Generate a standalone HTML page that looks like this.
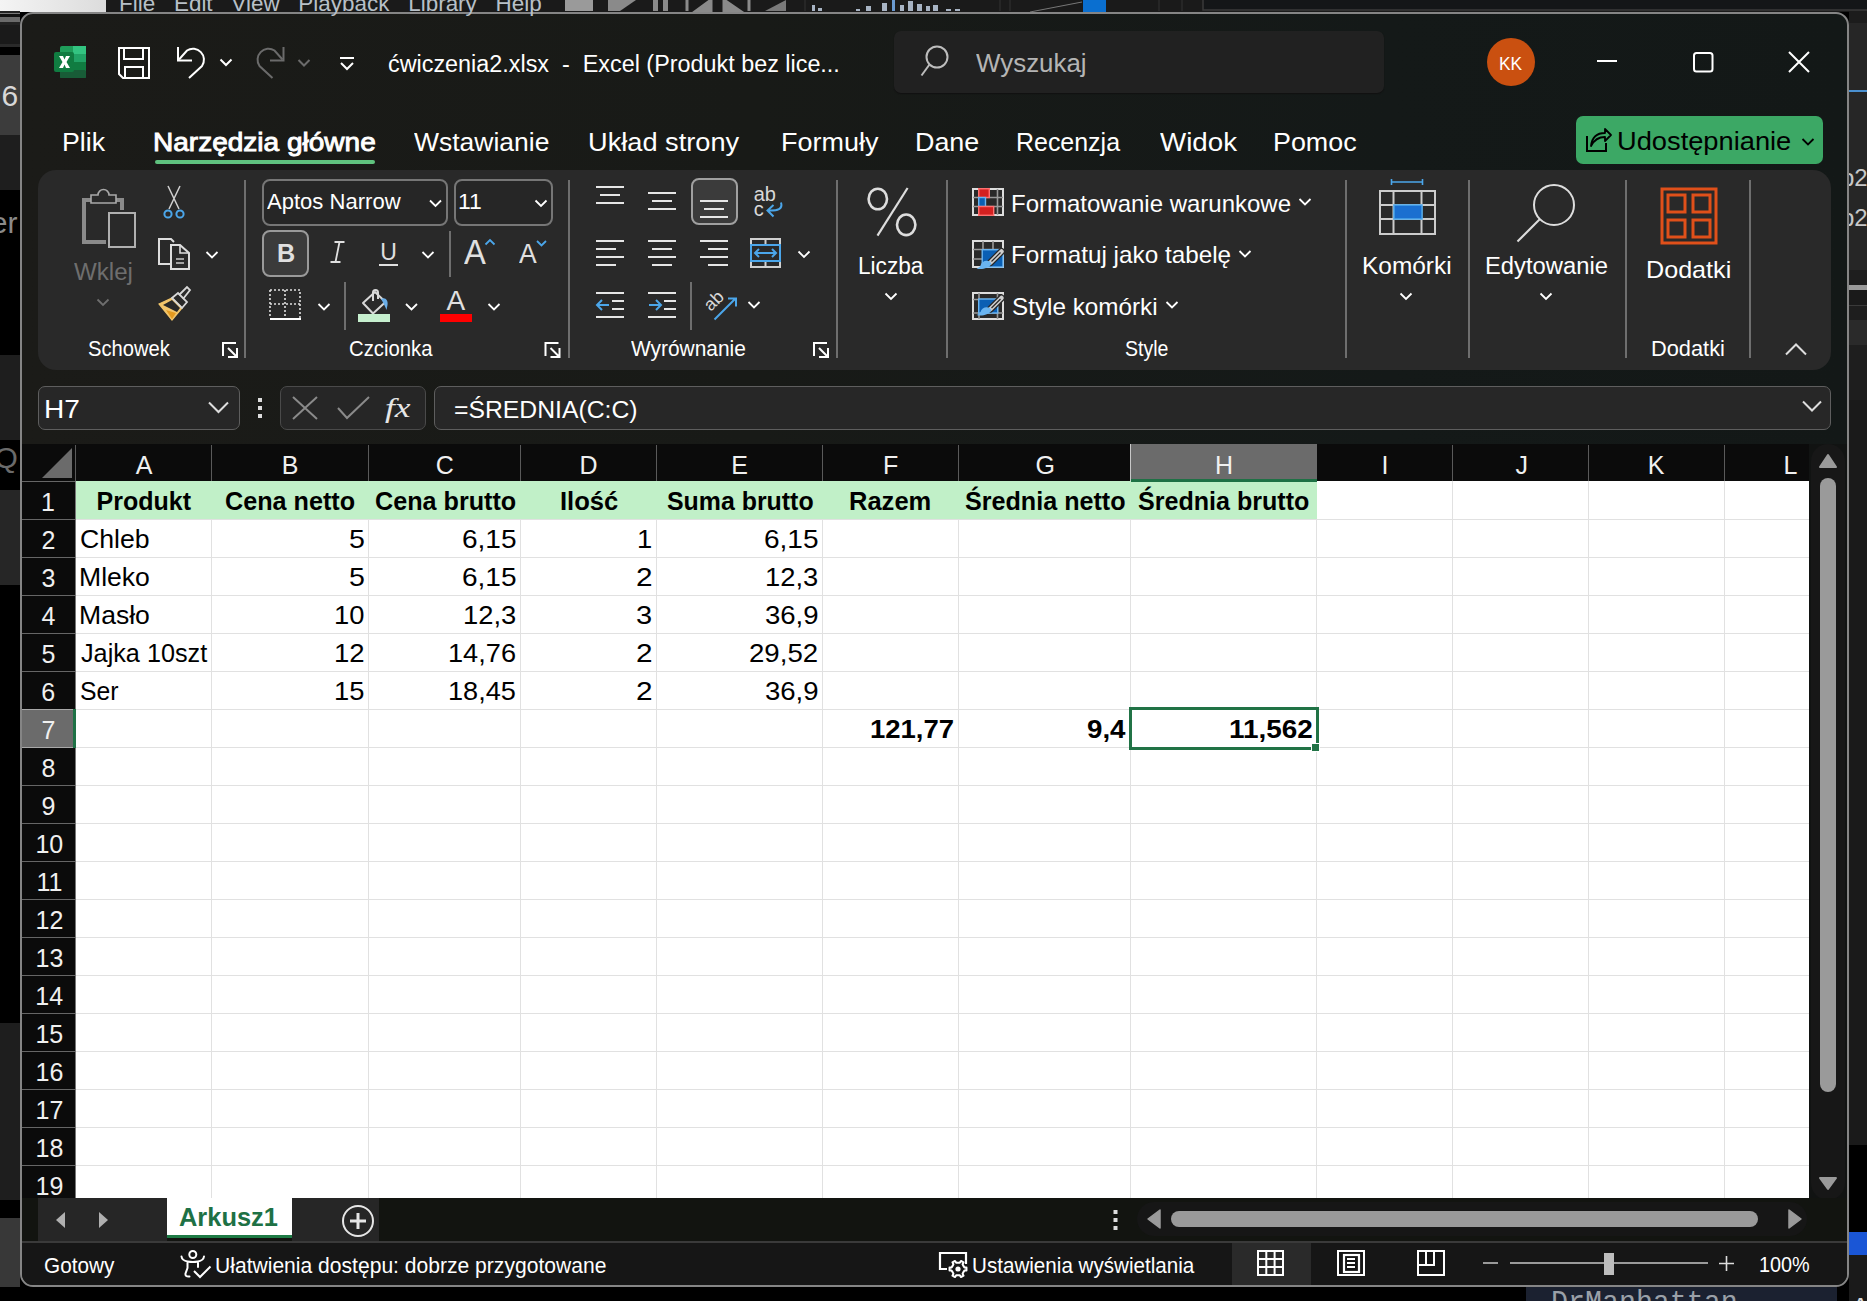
<!DOCTYPE html>
<html><head><meta charset="utf-8">
<style>
*{box-sizing:border-box;margin:0;padding:0}
html,body{width:1867px;height:1301px;overflow:hidden;background:#000;font-family:"Liberation Sans",sans-serif;color:#fff}
.a{position:absolute}
.t{position:absolute;white-space:nowrap;line-height:1}
svg{position:absolute;overflow:visible}
</style></head><body>
<div class="a" style="left:0px;top:0px;width:106px;height:12px;background:linear-gradient(90deg,#f4f4f4,#dcdcdc)"></div>
<div class="a" style="left:106px;top:0px;width:1761px;height:12px;background:#1a1a1a"></div>
<div class="a" style="left:0px;top:11px;width:20px;height:1290px;background:#000"></div>
<div class="a" style="left:0px;top:11px;width:20px;height:2px;background:#222"></div>
<div class="a" style="left:0px;top:13px;width:20px;height:1px;background:#7a7a7a"></div>
<div class="a" style="left:0px;top:14px;width:20px;height:3px;background:#111"></div>
<div class="a" style="left:0px;top:17px;width:20px;height:5px;background:#6a6a6a"></div>
<div class="a" style="left:0px;top:22px;width:20px;height:3px;background:#222"></div>
<div class="a" style="left:0px;top:25px;width:20px;height:19px;background:#1a1a1a"></div>
<div class="a" style="left:0px;top:44px;width:20px;height:3px;background:#2a2a2a"></div>
<div class="a" style="left:0px;top:55px;width:20px;height:80px;background:#3c3c3c"></div>
<div class="a" style="left:0px;top:135px;width:20px;height:55px;background:#1e1e1e"></div>
<div class="a" style="left:0px;top:355px;width:20px;height:85px;background:#1e1e1e"></div>
<div class="a" style="left:0px;top:490px;width:20px;height:95px;background:#262626"></div>
<div class="a" style="left:0px;top:1023px;width:20px;height:177px;background:#1e1e1e"></div>
<div class="a" style="left:0px;top:1218px;width:20px;height:69px;background:#383838"></div>
<div class="t" style="left:1.5px;top:80.6px;font-size:30px;color:#d8d8d8;font-weight:normal;">6</div>
<div class="t" style="left:-9.3px;top:207.6px;font-size:30px;color:#8a8a8a;font-weight:normal;">er</div>
<div class="t" style="left:-5.4px;top:442.6px;font-size:30px;color:#6a6a6a;font-weight:normal;">Q</div>
<div class="a" style="left:1849px;top:0px;width:18px;height:1301px;background:#1a1a1a"></div>
<div class="a" style="left:1849px;top:0px;width:18px;height:8px;background:#222"></div>
<div class="a" style="left:1849px;top:8px;width:18px;height:1px;background:#444"></div>
<div class="a" style="left:1849px;top:9px;width:18px;height:14px;background:#1c1c1c"></div>
<div class="a" style="left:1849px;top:23px;width:18px;height:67px;background:#262626"></div>
<div class="a" style="left:1849px;top:90px;width:18px;height:2px;background:#4a90d0"></div>
<div class="a" style="left:1849px;top:92px;width:18px;height:178px;background:#262626"></div>
<div class="a" style="left:1849px;top:270px;width:18px;height:15px;background:#1e1e1e"></div>
<div class="a" style="left:1849px;top:285px;width:18px;height:5px;background:#9a9a9a"></div>
<div class="a" style="left:1849px;top:290px;width:18px;height:15px;background:#1a1a1a"></div>
<div class="a" style="left:1849px;top:305px;width:18px;height:1px;background:#3a3a3a"></div>
<div class="a" style="left:1849px;top:306px;width:18px;height:14px;background:#1e1e1e"></div>
<div class="a" style="left:1849px;top:320px;width:18px;height:25px;background:#2a2a2a"></div>
<div class="a" style="left:1849px;top:345px;width:18px;height:55px;background:#1e1e1e"></div>
<div class="a" style="left:1849px;top:1145px;width:18px;height:87px;background:#000"></div>
<div class="a" style="left:1849px;top:1232px;width:18px;height:23px;background:#1a56d6"></div>
<div class="t" style="left:1841.0px;top:165.7px;font-size:24px;color:#c8c8c8;font-weight:normal;">b2</div>
<div class="t" style="left:1841.0px;top:205.7px;font-size:24px;color:#c8c8c8;font-weight:normal;">b2</div>
<div class="t" style="left:1850.9px;top:1294.3px;font-size:28px;color:#d8d8d8;font-weight:normal;">A</div>
<div class="a" style="left:1526px;top:1285px;width:311px;height:16px;background:#1b2130"></div>
<svg style="left:0px;top:0px;" width="1" height="1" viewBox="0 0 1 1">
<rect x="565" y="0" width="28" height="11" fill="#9a9a9a"/>
<path d="M608,0 L636,0 L620,11 H608 Z" fill="#8a8a8a"/>
<rect x="653" y="0" width="5" height="11" fill="#8a8a8a"/><rect x="663" y="0" width="5" height="11" fill="#8a8a8a"/>
<path d="M687,0 V11 M711,0 L696,11 H711 Z" stroke="#8a8a8a" stroke-width="3" fill="#8a8a8a"/>
<path d="M724,0 L740,11 H724 Z M749,0 V11" stroke="#8a8a8a" stroke-width="3" fill="#8a8a8a"/>
<path d="M765,11 L786,0 V11 Z" fill="#7a7a7a"/>
<path d="M805,0 V11 M1000,0 V11 M1010,0 V11 M1159,0 V11 M1182,0 V11" stroke="#333" stroke-width="1"/>
<rect x="812" y="5" width="3" height="6" fill="#a8b4c4"/><rect x="818" y="8" width="4" height="3" fill="#a8b4c4"/>
<rect x="856" y="9" width="4" height="2" fill="#a8b4c4"/><rect x="866" y="6" width="5" height="5" fill="#a8b4c4"/>
<rect x="882" y="3" width="5" height="8" fill="#a8b4c4"/><rect x="892" y="0" width="3" height="11" fill="#6a9ad0"/>
<rect x="900" y="5" width="4" height="6" fill="#a8b4c4"/><rect x="908" y="1" width="5" height="10" fill="#a8b4c4"/>
<rect x="917" y="4" width="5" height="7" fill="#a8b4c4"/><rect x="926" y="6" width="4" height="5" fill="#a8b4c4"/>
<rect x="933" y="5" width="5" height="6" fill="#a8b4c4"/><rect x="946" y="9" width="5" height="2" fill="#a8b4c4"/><rect x="955" y="9" width="5" height="2" fill="#a8b4c4"/>
<path d="M1030,12 L1082,2" stroke="#777" stroke-width="1"/>
<rect x="1083" y="0" width="23" height="12" fill="#0a6fd0"/>
<rect x="1203" y="-2" width="680" height="12" fill="#141618" stroke="#3a3a3a" stroke-width="1.5"/>
</svg>
<div class="a" style="left:20px;top:12px;width:1829px;height:1275px;border:2px solid #858585;border-radius:13px;background:linear-gradient(90deg,#1b1b18 0%,#181a17 40%,#141918 75%,#131817 100%);overflow:hidden"></div>
<div class="t" style="left:119.2px;top:-6.6px;font-size:22px;color:#b8c0c8;font-weight:normal;transform:scaleX(1.0209);transform-origin:left top;">File&nbsp;&nbsp; Edit&nbsp;&nbsp; View&nbsp;&nbsp; Playback&nbsp;&nbsp; Library&nbsp;&nbsp; Help</div>
<svg style="left:54px;top:46px;" width="32" height="32" viewBox="0 0 32 32">
<rect x="6" y="0" width="26" height="32" rx="2" fill="#1f9d5a"/>
<rect x="19" y="0" width="13" height="8" fill="#33c481"/>
<rect x="19" y="8" width="13" height="8" fill="#21a366"/>
<rect x="19" y="16" width="13" height="8" fill="#107c41"/>
<rect x="6" y="24" width="26" height="8" rx="1" fill="#185c37"/>
<rect x="0" y="6" width="20" height="20" rx="2" fill="#107c41"/>
<path d="M5,10 L9,10 L10.5,13.5 L12,10 L16,10 L12.5,16 L16,22 L12,22 L10.5,18.5 L9,22 L5,22 L8.5,16 Z" fill="#fff"/>
</svg>
<svg style="left:118px;top:47px;" width="32" height="32" viewBox="0 0 32 32">
<path d="M1,1 H31 V31 H5 L1,27 Z" fill="none" stroke="#fff" stroke-width="2"/>
<path d="M6,1 V12 H25 V1" fill="none" stroke="#fff" stroke-width="2"/>
<path d="M7,31 V20 H25 V31" fill="none" stroke="#fff" stroke-width="2"/>
</svg>
<svg style="left:0px;top:0px;" width="1" height="1" viewBox="0 0 1 1">
<path d="M178,47 V60.5 H192" fill="none" stroke="#fff" stroke-width="2"/>
<path d="M179,59.5 L187,50.5 A11,11 0 0 1 202,66 L189,78" fill="none" stroke="#fff" stroke-width="2"/>
<path d="M220.5,59.5 L226,65.0 L231.5,59.5" fill="none" stroke="#fff" stroke-width="2"/></svg>
<svg style="left:0px;top:0px;" width="1" height="1" viewBox="0 0 1 1">
<path d="M283.5,47 V60.5 H270" fill="none" stroke="#6b6b6b" stroke-width="2"/>
<path d="M282.5,59.5 L274.5,50.5 A11,11 0 0 0 259.5,66 L272.5,78" fill="none" stroke="#6b6b6b" stroke-width="2"/>
<path d="M298.5,60 L304,65.5 L309.5,60" fill="none" stroke="#6b6b6b" stroke-width="2"/></svg>
<svg style="left:0px;top:0px;" width="1" height="1" viewBox="0 0 1 1"><path d="M340,58 H354" stroke="#fff" stroke-width="2"/><path d="M341.0,63 L347,69.0 L353.0,63" fill="none" stroke="#fff" stroke-width="2"/></svg>
<div class="t" style="left:387.7px;top:52.5px;font-size:23px;color:#fff;font-weight:normal;transform:scaleX(1.0158);transform-origin:left top;">&#263;wiczenia2.xlsx&nbsp; -&nbsp; Excel (Produkt bez lice...</div>
<div class="a" style="left:894px;top:31px;width:490px;height:62px;background:#212121;border-radius:7px;box-shadow:0 1px 1px #111"></div>
<svg style="left:0px;top:0px;" width="1" height="1" viewBox="0 0 1 1"><circle cx="937" cy="57" r="10.5" fill="none" stroke="#bdbdbd" stroke-width="2"/><path d="M929.5,64.5 L921.5,75.5" stroke="#bdbdbd" stroke-width="2"/></svg>
<div class="t" style="left:975.9px;top:50.0px;font-size:26px;color:#b5b5b5;font-weight:normal;transform:scaleX(0.9963);transform-origin:left top;">Wyszukaj</div>
<div class="a" style="left:1487px;top:38px;width:48px;height:48px;border-radius:50%;background:#ca5010"></div>
<div class="t" style="left:1498.9px;top:53.7px;font-size:19px;color:#fff;font-weight:normal;transform:scaleX(0.9110);transform-origin:left top;">KK</div>
<svg style="left:0px;top:0px;" width="1" height="1" viewBox="0 0 1 1">
<path d="M1597,61 H1617" stroke="#fff" stroke-width="2"/>
<rect x="1694" y="53" width="18.5" height="18.5" rx="2.5" fill="none" stroke="#fff" stroke-width="2"/>
<path d="M1789,52 L1809,72 M1809,52 L1789,72" stroke="#fff" stroke-width="2"/>
</svg>
<div class="t" style="left:62.2px;top:129.0px;font-size:26px;color:#fff;font-weight:normal;transform:scaleX(1.0276);transform-origin:left top;">Plik</div>
<div class="t" style="left:153.4px;top:129.0px;font-size:26px;color:#fff;font-weight:normal;transform:scaleX(1.0777);transform-origin:left top;-webkit-text-stroke:0.9px #fff;">Narz&#281;dzia g&#322;&oacute;wne</div>
<div class="t" style="left:413.7px;top:129.0px;font-size:26px;color:#fff;font-weight:normal;transform:scaleX(1.0190);transform-origin:left top;">Wstawianie</div>
<div class="t" style="left:587.9px;top:129.0px;font-size:26px;color:#fff;font-weight:normal;transform:scaleX(1.0463);transform-origin:left top;">Uk&#322;ad strony</div>
<div class="t" style="left:780.6px;top:129.0px;font-size:26px;color:#fff;font-weight:normal;transform:scaleX(1.0371);transform-origin:left top;">Formu&#322;y</div>
<div class="t" style="left:915.3px;top:129.0px;font-size:26px;color:#fff;font-weight:normal;transform:scaleX(1.0340);transform-origin:left top;">Dane</div>
<div class="t" style="left:1016.0px;top:129.0px;font-size:26px;color:#fff;font-weight:normal;transform:scaleX(0.9595);transform-origin:left top;">Recenzja</div>
<div class="t" style="left:1159.5px;top:129.0px;font-size:26px;color:#fff;font-weight:normal;transform:scaleX(1.0666);transform-origin:left top;">Widok</div>
<div class="t" style="left:1273.3px;top:129.0px;font-size:26px;color:#fff;font-weight:normal;transform:scaleX(1.0333);transform-origin:left top;">Pomoc</div>
<div class="a" style="left:155px;top:160px;width:220px;height:4px;background:#5fc27e;border-radius:2px"></div>
<div class="a" style="left:1576px;top:116px;width:247px;height:48px;background:#3ca865;border-radius:7px"></div>
<svg style="left:0px;top:0px;" width="1" height="1" viewBox="0 0 1 1">
<path d="M1587,136 V151 H1606 V143" fill="none" stroke="#000" stroke-width="2"/>
<path d="M1591,146 C1592,137 1597,133 1605,133 V129 L1611,135 L1605,141 V137 C1599,137 1594,140 1591,146 Z" fill="none" stroke="#000" stroke-width="1.8" stroke-linejoin="round"/>
<path d="M1802.5,139 L1808,144.5 L1813.5,139" fill="none" stroke="#000" stroke-width="1.8"/></svg>
<div class="t" style="left:1616.9px;top:128.0px;font-size:26px;color:#000;font-weight:normal;transform:scaleX(1.0484);transform-origin:left top;">Udost&#281;pnianie</div>
<div class="a" style="left:38px;top:170px;width:1793px;height:200px;background:#292929;border-radius:18px"></div>
<div class="a" style="left:244px;top:180px;width:2px;height:178px;background:#6e6e6e"></div>
<div class="a" style="left:568px;top:180px;width:2px;height:178px;background:#6e6e6e"></div>
<div class="a" style="left:836px;top:180px;width:2px;height:178px;background:#6e6e6e"></div>
<div class="a" style="left:946px;top:180px;width:2px;height:178px;background:#6e6e6e"></div>
<div class="a" style="left:1345px;top:180px;width:2px;height:178px;background:#6e6e6e"></div>
<div class="a" style="left:1468px;top:180px;width:2px;height:178px;background:#6e6e6e"></div>
<div class="a" style="left:1625px;top:180px;width:2px;height:178px;background:#6e6e6e"></div>
<div class="a" style="left:1749px;top:180px;width:2px;height:178px;background:#6e6e6e"></div>
<div class="t" style="left:88.1px;top:337.9px;font-size:22px;color:#fff;font-weight:normal;transform:scaleX(0.9173);transform-origin:left top;">Schowek</div>
<div class="t" style="left:349.0px;top:337.9px;font-size:22px;color:#fff;font-weight:normal;transform:scaleX(0.9227);transform-origin:left top;">Czcionka</div>
<div class="t" style="left:630.5px;top:337.9px;font-size:22px;color:#fff;font-weight:normal;transform:scaleX(0.9499);transform-origin:left top;">Wyr&oacute;wnanie</div>
<div class="t" style="left:1124.8px;top:337.9px;font-size:22px;color:#fff;font-weight:normal;transform:scaleX(0.8872);transform-origin:left top;">Style</div>
<div class="t" style="left:1650.9px;top:337.9px;font-size:22px;color:#fff;font-weight:normal;transform:scaleX(0.9902);transform-origin:left top;">Dodatki</div>
<svg style="left:0px;top:0px;" width="1" height="1" viewBox="0 0 1 1"><path d="M223,356 V343 H236" fill="none" stroke="#fff" stroke-width="2"/><path d="M228,348 L236.5,356.5 M237,348 V357 H228" fill="none" stroke="#fff" stroke-width="2"/><path d="M545.5,356 V343 H558.5" fill="none" stroke="#fff" stroke-width="2"/><path d="M550.5,348 L559.0,356.5 M559.5,348 V357 H550.5" fill="none" stroke="#fff" stroke-width="2"/><path d="M814,356 V343 H827" fill="none" stroke="#fff" stroke-width="2"/><path d="M819,348 L827.5,356.5 M828,348 V357 H819" fill="none" stroke="#fff" stroke-width="2"/></svg>
<svg style="left:0px;top:0px;" width="1" height="1" viewBox="0 0 1 1">
<path d="M96,200 H84 V242 H106" fill="none" stroke="#8a8a8a" stroke-width="4"/>
<path d="M112,200 H122 V210" fill="none" stroke="#8a8a8a" stroke-width="4"/>
<path d="M91,195 H98 A5.5,5.5 0 0 1 109,195 H116 V203 H91 Z" fill="#292929" stroke="#a8a8a8" stroke-width="1.6"/>
<rect x="109" y="213" width="26" height="34" fill="none" stroke="#b0b0b0" stroke-width="2"/>
<path d="M97.5,299.5 L103,305.0 L108.5,299.5" fill="none" stroke="#6e6e6e" stroke-width="1.8"/></svg>
<div class="t" style="left:74.2px;top:260.5px;font-size:23px;color:#6e6e6e;font-weight:normal;transform:scaleX(1.0476);transform-origin:left top;">Wklej</div>
<svg style="left:0px;top:0px;" width="1" height="1" viewBox="0 0 1 1">
<path d="M168,186 L179,209 M180,186 L169,209" stroke="#d0d0d0" stroke-width="1.5"/>
<circle cx="168" cy="214" r="3.6" fill="none" stroke="#4ba6ea" stroke-width="2"/>
<circle cx="180" cy="214" r="3.6" fill="none" stroke="#4ba6ea" stroke-width="2"/>
</svg>
<svg style="left:0px;top:0px;" width="1" height="1" viewBox="0 0 1 1">
<path d="M171,264 H159 V239 H171 L174,242" fill="none" stroke="#ddd" stroke-width="2"/>
<path d="M171,245 H180 L189,253 V269 H171 Z" fill="#292929" stroke="#ddd" stroke-width="2"/>
<path d="M180,245 V253 H189" fill="none" stroke="#ddd" stroke-width="1.6"/>
<path d="M176,259 H184 M176,263 H184" stroke="#ccc" stroke-width="1.5"/>
<path d="M206.5,252 L212,257.5 L217.5,252" fill="none" stroke="#fff" stroke-width="1.8"/></svg>
<svg style="left:0px;top:0px;" width="1" height="1" viewBox="0 0 1 1">
<path d="M159,304 L172,298 L182,308 L172,320 Z" fill="#f3c66b" stroke="#f3c66b" stroke-width="1.2"/>
<path d="M163,305 L172,300 L180,308 L177,312 Z" fill="#292929"/>
<path d="M166,310 L176,313 L172,319 Z" fill="#e59a1f"/>
<path d="M172,298 L178,293 L187,302 L182,308 Z" fill="none" stroke="#d8d8d8" stroke-width="1.8"/>
<path d="M179,295 L187,287 L190,290 L183,299" fill="none" stroke="#d8d8d8" stroke-width="1.8"/>
</svg>
<div class="a" style="left:262px;top:179px;width:186px;height:47px;border:2px solid #767676;border-radius:8px;background:#262626"></div>
<div class="t" style="left:267.4px;top:190.9px;font-size:22px;color:#fff;font-weight:normal;transform:scaleX(1.0023);transform-origin:left top;">Aptos Narrow</div>
<div class="a" style="left:454px;top:179px;width:99px;height:47px;border:2px solid #767676;border-radius:8px;background:#262626"></div>
<div class="t" style="left:457.6px;top:190.9px;font-size:22px;color:#fff;font-weight:normal;transform:scaleX(1.0448);transform-origin:left top;">11</div>
<svg style="left:0px;top:0px;" width="1" height="1" viewBox="0 0 1 1"><path d="M430.0,200.5 L435.5,206.0 L441.0,200.5" fill="none" stroke="#fff" stroke-width="1.8"/><path d="M535.5,200.5 L541,206.0 L546.5,200.5" fill="none" stroke="#fff" stroke-width="1.8"/></svg>
<div class="a" style="left:262px;top:230px;width:47px;height:47px;border:2px solid #9a9a9a;border-radius:8px;background:#3b3b3b"></div>
<div class="t" style="left:277.4px;top:240.0px;font-size:26px;color:#e0e0e0;font-weight:bold;transform:scaleX(0.9686);transform-origin:left top;">B</div>
<svg style="left:0px;top:0px;" width="1" height="1" viewBox="0 0 1 1"><path d="M334.5,242 H344.5 M330.5,262 H340.5 M339.5,242 L335.5,262" stroke="#e0e0e0" stroke-width="1.8"/></svg>
<div class="t" style="left:380.2px;top:241.0px;font-size:23px;color:#e0e0e0;font-weight:normal;">U</div>
<div class="a" style="left:379px;top:264px;width:19px;height:2px;background:#e0e0e0"></div>
<svg style="left:0px;top:0px;" width="1" height="1" viewBox="0 0 1 1"><path d="M422.5,252 L428,257.5 L433.5,252" fill="none" stroke="#fff" stroke-width="1.8"/></svg>
<div class="a" style="left:449px;top:231px;width:2px;height:46px;background:#6e6e6e"></div>
<div class="t" style="left:463.7px;top:234.4px;font-size:35px;color:#e0e0e0;font-weight:normal;transform:scaleX(0.9353);transform-origin:left top;">A</div>
<div class="t" style="left:518.9px;top:240.3px;font-size:28px;color:#e0e0e0;font-weight:normal;transform:scaleX(0.9459);transform-origin:left top;">A</div>
<svg style="left:0px;top:0px;" width="1" height="1" viewBox="0 0 1 1"><path d="M485.5,244.5 L490,240 L494.5,244.5" fill="none" stroke="#4ba6ea" stroke-width="1.8"/><path d="M537.0,241 L541.5,245.5 L546.0,241" fill="none" stroke="#4ba6ea" stroke-width="1.8"/></svg>
<svg style="left:0px;top:0px;" width="1" height="1" viewBox="0 0 1 1">
<path d="M270,290 H300 V318 M270,290 V318 M285,290 V318 M270,304 H300" fill="none" stroke="#e0e0e0" stroke-width="1.6" stroke-dasharray="2,2"/>
<path d="M270,319 H301" stroke="#fff" stroke-width="2"/>
<path d="M318.5,304 L324,309.5 L329.5,304" fill="none" stroke="#fff" stroke-width="1.8"/></svg>
<div class="a" style="left:344px;top:282px;width:2px;height:48px;background:#6e6e6e"></div>
<svg style="left:0px;top:0px;" width="1" height="1" viewBox="0 0 1 1">
<path d="M363,303 L375,292 L385.5,302 L373,313.5 Z" fill="none" stroke="#d8d8d8" stroke-width="2" stroke-linejoin="round"/>
<path d="M373,301 V292.5 A2.5,2.5 0 0 1 378,292.5 V299" fill="none" stroke="#d8d8d8" stroke-width="2"/>
<path d="M381,299 C385,296.5 388.5,300 387.5,305 L386.5,310 C385,305.5 383,302.5 381,299 Z" fill="#6aaee8"/>
<path d="M406.0,304 L411.5,309.5 L417.0,304" fill="none" stroke="#fff" stroke-width="1.8"/></svg>
<div class="a" style="left:358px;top:314px;width:32px;height:8px;background:#c6efce"></div>
<div class="t" style="left:446.6px;top:287.3px;font-size:28px;color:#e0e0e0;font-weight:normal;">A</div>
<div class="a" style="left:440px;top:314px;width:32px;height:8px;background:#ff0000"></div>
<svg style="left:0px;top:0px;" width="1" height="1" viewBox="0 0 1 1"><path d="M488.5,304 L494,309.5 L499.5,304" fill="none" stroke="#fff" stroke-width="1.8"/></svg>
<div class="a" style="left:691px;top:178px;width:47px;height:47px;border:2px solid #a0a0a0;border-radius:8px;background:#3b3b3b"></div>
<svg style="left:0px;top:0px;" width="1" height="1" viewBox="0 0 1 1"><path d="M596,187 H624" stroke="#e6e6e6" stroke-width="2"/><path d="M600,195 H620" stroke="#e6e6e6" stroke-width="2"/><path d="M596,203 H624" stroke="#e6e6e6" stroke-width="2"/><path d="M648,193 H676" stroke="#e6e6e6" stroke-width="2"/><path d="M652,201 H672" stroke="#e6e6e6" stroke-width="2"/><path d="M648,209 H676" stroke="#e6e6e6" stroke-width="2"/><path d="M700,201 H728" stroke="#e6e6e6" stroke-width="2"/><path d="M704,209 H724" stroke="#e6e6e6" stroke-width="2"/><path d="M700,217 H728" stroke="#e6e6e6" stroke-width="2"/><path d="M596,241 H624" stroke="#e6e6e6" stroke-width="2"/><path d="M596,249 H616" stroke="#e6e6e6" stroke-width="2"/><path d="M596,257 H624" stroke="#e6e6e6" stroke-width="2"/><path d="M596,265 H616" stroke="#e6e6e6" stroke-width="2"/><path d="M648,241 H676" stroke="#e6e6e6" stroke-width="2"/><path d="M652,249 H672" stroke="#e6e6e6" stroke-width="2"/><path d="M648,257 H676" stroke="#e6e6e6" stroke-width="2"/><path d="M652,265 H672" stroke="#e6e6e6" stroke-width="2"/><path d="M700,241 H728" stroke="#e6e6e6" stroke-width="2"/><path d="M708,249 H728" stroke="#e6e6e6" stroke-width="2"/><path d="M700,257 H728" stroke="#e6e6e6" stroke-width="2"/><path d="M708,265 H728" stroke="#e6e6e6" stroke-width="2"/><path d="M596,293 H624" stroke="#e6e6e6" stroke-width="2"/><path d="M612,301 H624" stroke="#e6e6e6" stroke-width="2"/><path d="M612,309 H624" stroke="#e6e6e6" stroke-width="2"/><path d="M596,317 H624" stroke="#e6e6e6" stroke-width="2"/><path d="M648,293 H676" stroke="#e6e6e6" stroke-width="2"/><path d="M664,301 H676" stroke="#e6e6e6" stroke-width="2"/><path d="M664,309 H676" stroke="#e6e6e6" stroke-width="2"/><path d="M648,317 H676" stroke="#e6e6e6" stroke-width="2"/></svg>
<svg style="left:0px;top:0px;" width="1" height="1" viewBox="0 0 1 1">
<path d="M597,305 H609 M602,300 L597,305 L602,310" fill="none" stroke="#4ba6ea" stroke-width="2"/>
<path d="M649,305 H661 M656,300 L661,305 L656,310" fill="none" stroke="#4ba6ea" stroke-width="2"/>
</svg>
<div class="a" style="left:690px;top:282px;width:2px;height:48px;background:#6e6e6e"></div>
<div class="t" style="left:753.7px;top:184.1px;font-size:20px;color:#d8d8d8;font-weight:normal;">ab</div>
<div class="t" style="left:753.7px;top:199.1px;font-size:20px;color:#d8d8d8;font-weight:normal;">c</div>
<svg style="left:0px;top:0px;" width="1" height="1" viewBox="0 0 1 1"><path d="M781,202.5 C783,209 778,211 768,210.5 M773.5,205 L767.5,210.5 L773.5,216.5" fill="none" stroke="#4ba6ea" stroke-width="2"/></svg>
<svg style="left:0px;top:0px;" width="1" height="1" viewBox="0 0 1 1">
<rect x="751" y="239" width="29" height="28" fill="none" stroke="#d0d0d0" stroke-width="2"/>
<path d="M765.5,239 V267" stroke="#d0d0d0" stroke-width="2"/>
<rect x="751" y="245" width="29" height="16" fill="#292929" stroke="#4ba6ea" stroke-width="2"/>
<path d="M755,253 H776 M759,249 L755,253 L759,257 M772,249 L776,253 L772,257" fill="none" stroke="#4ba6ea" stroke-width="2"/>
<path d="M798.5,251.5 L804,257.0 L809.5,251.5" fill="none" stroke="#fff" stroke-width="1.8"/></svg>
<div class="t" style="left:711px;top:296.8px;font-size:18px;color:#d8d8d8;transform:rotate(-45deg);transform-origin:0 15.2px">ab</div>
<svg style="left:0px;top:0px;" width="1" height="1" viewBox="0 0 1 1"><path d="M714.5,319.5 L735,299 M728,298.5 H736 V306.5" fill="none" stroke="#4ba6ea" stroke-width="2"/><path d="M748.5,302 L754,307.5 L759.5,302" fill="none" stroke="#fff" stroke-width="1.8"/></svg>
<svg style="left:0px;top:0px;" width="1" height="1" viewBox="0 0 1 1">
<ellipse cx="877.8" cy="199" rx="9.2" ry="10.3" fill="none" stroke="#ddd" stroke-width="2.6"/>
<ellipse cx="906.2" cy="224.8" rx="9.2" ry="10.3" fill="none" stroke="#ddd" stroke-width="2.6"/>
<path d="M907.6,188 L877.5,235.7" stroke="#ddd" stroke-width="2.2"/>
<path d="M885.5,293.5 L891,299.0 L896.5,293.5" fill="none" stroke="#fff" stroke-width="1.8"/></svg>
<div class="t" style="left:858.1px;top:254.5px;font-size:23px;color:#fff;font-weight:normal;transform:scaleX(0.9830);transform-origin:left top;">Liczba</div>
<svg style="left:0px;top:0px;" width="1" height="1" viewBox="0 0 1 1">
<rect x="973" y="189" width="30" height="26" fill="none" stroke="#ddd" stroke-width="2"/>
<path d="M997.5,189 V215 M973,197.5 H1003 M973,206.5 H1003" stroke="#999" stroke-width="1.6"/>
<rect x="978.7" y="188.7" width="10.6" height="8.8" fill="#d42020" stroke="#ff7070" stroke-width="1.4"/>
<rect x="978.7" y="197.5" width="6.8" height="9" fill="#0a5fb4" stroke="#6ab4f0" stroke-width="1.4"/>
<rect x="978.7" y="206.5" width="15" height="8.8" fill="#d42020" stroke="#ff7070" stroke-width="1.4"/>
</svg>
<div class="t" style="left:1011.0px;top:191.7px;font-size:24px;color:#fff;font-weight:normal;transform:scaleX(0.9996);transform-origin:left top;">Formatowanie warunkowe</div>
<svg style="left:0px;top:0px;" width="1" height="1" viewBox="0 0 1 1"><path d="M1299.5,199 L1305,204.5 L1310.5,199" fill="none" stroke="#fff" stroke-width="1.8"/></svg>
<svg style="left:0px;top:0px;" width="1" height="1" viewBox="0 0 1 1">
<rect x="973" y="241" width="30" height="26" fill="none" stroke="#ddd" stroke-width="2"/>
<path d="M983,241 V267 M993,241 V267 M973,249.5 H1003 M973,259 H1003" stroke="#999" stroke-width="1.6"/>
<rect x="982.2" y="249.7" width="20.8" height="17.3" fill="#0a5fb4" stroke="#6ab4f0" stroke-width="1.4"/>
<path d="M1001.5,251.5 L990.5,262.5" stroke="#292929" stroke-width="7" stroke-linecap="round"/>
<path d="M1001.5,251.5 L990.5,262.5" stroke="#d0d0d0" stroke-width="4.5" stroke-linecap="round"/>
<path d="M1000.5,252.5 L991.5,261.5" stroke="#292929" stroke-width="1.2"/>
<path d="M990,261.5 C986,259.5 981.5,261.5 980.5,265.5 C979.5,267.5 978,268 976.5,268.5 C981.5,270 988.5,268.5 991.5,264 Z" fill="#6ab4f0"/>
</svg>
<div class="t" style="left:1011.0px;top:242.9px;font-size:24px;color:#fff;font-weight:normal;transform:scaleX(1.0121);transform-origin:left top;">Formatuj jako tabel&#281;</div>
<svg style="left:0px;top:0px;" width="1" height="1" viewBox="0 0 1 1"><path d="M1239.5,251 L1245,256.5 L1250.5,251" fill="none" stroke="#fff" stroke-width="1.8"/></svg>
<svg style="left:0px;top:0px;" width="1" height="1" viewBox="0 0 1 1">
<rect x="973" y="293" width="30" height="26" fill="none" stroke="#ddd" stroke-width="2"/>
<path d="M979,293 V319 M997.5,293 V319 M973,299.5 H1003 M973,313 H1003" stroke="#999" stroke-width="1.6"/>
<rect x="978.7" y="299" width="19" height="14" fill="#0a5fb4" stroke="#6ab4f0" stroke-width="1.4"/>
<path d="M1001.5,298 L990.5,309" stroke="#292929" stroke-width="7" stroke-linecap="round"/>
<path d="M1001.5,298 L990.5,309" stroke="#d0d0d0" stroke-width="4.5" stroke-linecap="round"/>
<path d="M1000.5,299 L991.5,308" stroke="#292929" stroke-width="1.2"/>
<path d="M990,308 C986,306 981.5,308 980.5,312 C979.5,314 978,314.5 976.5,315 C981.5,316.5 988.5,315 991.5,310.5 Z" fill="#6ab4f0"/>
</svg>
<div class="t" style="left:1011.9px;top:294.5px;font-size:24px;color:#fff;font-weight:normal;transform:scaleX(1.0106);transform-origin:left top;">Style kom&oacute;rki</div>
<svg style="left:0px;top:0px;" width="1" height="1" viewBox="0 0 1 1"><path d="M1166.5,302 L1172,307.5 L1177.5,302" fill="none" stroke="#fff" stroke-width="1.8"/></svg>
<svg style="left:0px;top:0px;" width="1" height="1" viewBox="0 0 1 1">
<rect x="1380" y="191" width="55" height="43" fill="none" stroke="#ccc" stroke-width="2"/>
<path d="M1393.5,191 V234 M1421.5,191 V234 M1380,205 H1435 M1380,219 H1435" stroke="#ccc" stroke-width="2"/>
<rect x="1394" y="205" width="28" height="14" fill="#1a6fd0" stroke="#4ba6ea" stroke-width="1.5"/>
<path d="M1391.5,182 H1422.5 M1391.5,179 V185 M1422.5,179 V185" stroke="#4ba6ea" stroke-width="1.6"/>
<path d="M1400.5,293.5 L1406,299.0 L1411.5,293.5" fill="none" stroke="#fff" stroke-width="1.8"/></svg>
<div class="t" style="left:1362.0px;top:254.8px;font-size:23px;color:#fff;font-weight:normal;transform:scaleX(1.0630);transform-origin:left top;">Kom&oacute;rki</div>
<svg style="left:0px;top:0px;" width="1" height="1" viewBox="0 0 1 1">
<circle cx="1554" cy="205" r="20" fill="none" stroke="#ddd" stroke-width="2"/>
<path d="M1540,219 L1517.5,241.5" stroke="#ddd" stroke-width="2"/>
<path d="M1540.5,293.5 L1546,299.0 L1551.5,293.5" fill="none" stroke="#fff" stroke-width="1.8"/></svg>
<div class="t" style="left:1484.8px;top:254.8px;font-size:23px;color:#fff;font-weight:normal;transform:scaleX(1.0345);transform-origin:left top;">Edytowanie</div>
<svg style="left:0px;top:0px;" width="1" height="1" viewBox="0 0 1 1">
<rect x="1662" y="189" width="54" height="54" fill="none" stroke="#e0501a" stroke-width="3"/>
<rect x="1668" y="195" width="17" height="17" fill="none" stroke="#e0501a" stroke-width="3"/>
<rect x="1693" y="195" width="17" height="17" fill="none" stroke="#e0501a" stroke-width="3"/>
<rect x="1668" y="220" width="17" height="17" fill="none" stroke="#e0501a" stroke-width="3"/>
<rect x="1693" y="220" width="17" height="17" fill="none" stroke="#e0501a" stroke-width="3"/>
</svg>
<div class="t" style="left:1645.5px;top:257.7px;font-size:24px;color:#fff;font-weight:normal;transform:scaleX(1.0476);transform-origin:left top;">Dodatki</div>
<svg style="left:0px;top:0px;" width="1" height="1" viewBox="0 0 1 1"><path d="M1786.0,354.5 L1796,344.5 L1806.0,354.5" fill="none" stroke="#ddd" stroke-width="2"/></svg>
<div class="a" style="left:38px;top:386px;width:202px;height:44px;border:1.5px solid #5e5e5e;border-radius:7px;background:#272727"></div>
<div class="t" style="left:43.9px;top:395.7px;font-size:26px;color:#fff;font-weight:normal;transform:scaleX(1.0803);transform-origin:left top;">H7</div>
<svg style="left:0px;top:0px;" width="1" height="1" viewBox="0 0 1 1"><path d="M209.0,402.5 L218.5,412.0 L228.0,402.5" fill="none" stroke="#ddd" stroke-width="2"/></svg>
<svg style="left:0px;top:0px;" width="1" height="1" viewBox="0 0 1 1"><rect x="258" y="398" width="4" height="4" fill="#ddd"/><rect x="258" y="406" width="4" height="4" fill="#ddd"/><rect x="258" y="414" width="4" height="4" fill="#ddd"/></svg>
<div class="a" style="left:280px;top:386px;width:146px;height:44px;border:1.5px solid #4a4a4a;border-radius:7px;background:#262626"></div>
<svg style="left:0px;top:0px;" width="1" height="1" viewBox="0 0 1 1">
<path d="M293,397 L317,419 M317,397 L293,419" stroke="#8a8a8a" stroke-width="2"/>
<path d="M338,408 L347,418 L369,397" fill="none" stroke="#8a8a8a" stroke-width="2"/>
</svg>
<div class="t" style="left:385.1px;top:394.3px;font-size:28px;color:#e6e6e6;font-weight:normal;transform:scaleX(1.2670);transform-origin:left top;font-family:'Liberation Serif',serif;"><i>fx</i></div>
<div class="a" style="left:434px;top:386px;width:1397px;height:44px;border:1.5px solid #5e5e5e;border-radius:7px;background:#272727"></div>
<div class="t" style="left:454.4px;top:399.2px;font-size:23px;color:#fff;font-weight:normal;transform:scaleX(1.0756);transform-origin:left top;">=&#346;REDNIA(C:C)</div>
<svg style="left:0px;top:0px;" width="1" height="1" viewBox="0 0 1 1"><path d="M1803.0,401.5 L1812,410.5 L1821.0,401.5" fill="none" stroke="#ddd" stroke-width="2"/></svg>
<div class="a" style="left:22px;top:444px;width:1787px;height:37px;background:#0b0b0b"></div>
<div class="a" style="left:22px;top:481px;width:54px;height:717px;background:#0b0b0b"></div>
<div class="a" style="left:76px;top:481px;width:1733px;height:717px;background:#fff"></div>
<div class="a" style="left:76px;top:481px;width:1241px;height:38px;background:#c1f0c8"></div>
<svg style="left:0px;top:0px;" width="1" height="1" viewBox="0 0 1 1"><path d="M76,519.5 H1809" stroke="#e1e1e1" stroke-width="1"/><path d="M76,557.5 H1809" stroke="#e1e1e1" stroke-width="1"/><path d="M76,595.5 H1809" stroke="#e1e1e1" stroke-width="1"/><path d="M76,633.5 H1809" stroke="#e1e1e1" stroke-width="1"/><path d="M76,671.5 H1809" stroke="#e1e1e1" stroke-width="1"/><path d="M76,709.5 H1809" stroke="#e1e1e1" stroke-width="1"/><path d="M76,747.5 H1809" stroke="#e1e1e1" stroke-width="1"/><path d="M76,785.5 H1809" stroke="#e1e1e1" stroke-width="1"/><path d="M76,823.5 H1809" stroke="#e1e1e1" stroke-width="1"/><path d="M76,861.5 H1809" stroke="#e1e1e1" stroke-width="1"/><path d="M76,899.5 H1809" stroke="#e1e1e1" stroke-width="1"/><path d="M76,937.5 H1809" stroke="#e1e1e1" stroke-width="1"/><path d="M76,975.5 H1809" stroke="#e1e1e1" stroke-width="1"/><path d="M76,1013.5 H1809" stroke="#e1e1e1" stroke-width="1"/><path d="M76,1051.5 H1809" stroke="#e1e1e1" stroke-width="1"/><path d="M76,1089.5 H1809" stroke="#e1e1e1" stroke-width="1"/><path d="M76,1127.5 H1809" stroke="#e1e1e1" stroke-width="1"/><path d="M76,1165.5 H1809" stroke="#e1e1e1" stroke-width="1"/><path d="M76,1203.5 H1809" stroke="#e1e1e1" stroke-width="1"/><path d="M211.5,520 V1198" stroke="#e1e1e1" stroke-width="1"/><path d="M368.5,520 V1198" stroke="#e1e1e1" stroke-width="1"/><path d="M520.5,520 V1198" stroke="#e1e1e1" stroke-width="1"/><path d="M656.5,520 V1198" stroke="#e1e1e1" stroke-width="1"/><path d="M822.5,520 V1198" stroke="#e1e1e1" stroke-width="1"/><path d="M958.5,520 V1198" stroke="#e1e1e1" stroke-width="1"/><path d="M1130.5,520 V1198" stroke="#e1e1e1" stroke-width="1"/><path d="M1316.5,520 V1198" stroke="#e1e1e1" stroke-width="1"/><path d="M1452.5,520 V1198" stroke="#e1e1e1" stroke-width="1"/><path d="M1588.5,520 V1198" stroke="#e1e1e1" stroke-width="1"/><path d="M1724.5,520 V1198" stroke="#e1e1e1" stroke-width="1"/><path d="M1452.5,481 V520" stroke="#e1e1e1" stroke-width="1"/><path d="M1588.5,481 V520" stroke="#e1e1e1" stroke-width="1"/><path d="M1724.5,481 V520" stroke="#e1e1e1" stroke-width="1"/><path d="M211.5,445 V481" stroke="#5a5a5a" stroke-width="1"/><path d="M368.5,445 V481" stroke="#5a5a5a" stroke-width="1"/><path d="M520.5,445 V481" stroke="#5a5a5a" stroke-width="1"/><path d="M656.5,445 V481" stroke="#5a5a5a" stroke-width="1"/><path d="M822.5,445 V481" stroke="#5a5a5a" stroke-width="1"/><path d="M958.5,445 V481" stroke="#5a5a5a" stroke-width="1"/><path d="M1130.5,445 V481" stroke="#5a5a5a" stroke-width="1"/><path d="M1316.5,445 V481" stroke="#5a5a5a" stroke-width="1"/><path d="M1452.5,445 V481" stroke="#5a5a5a" stroke-width="1"/><path d="M1588.5,445 V481" stroke="#5a5a5a" stroke-width="1"/><path d="M1724.5,445 V481" stroke="#5a5a5a" stroke-width="1"/><path d="M75.5,445 V481" stroke="#5a5a5a" stroke-width="1"/><path d="M75.5,481 V1198" stroke="#777" stroke-width="1"/><path d="M22,481.5 H75" stroke="#666" stroke-width="1"/><path d="M22,519.5 H75" stroke="#666" stroke-width="1"/><path d="M22,557.5 H75" stroke="#666" stroke-width="1"/><path d="M22,595.5 H75" stroke="#666" stroke-width="1"/><path d="M22,633.5 H75" stroke="#666" stroke-width="1"/><path d="M22,671.5 H75" stroke="#666" stroke-width="1"/><path d="M22,709.5 H75" stroke="#666" stroke-width="1"/><path d="M22,747.5 H75" stroke="#666" stroke-width="1"/><path d="M22,785.5 H75" stroke="#666" stroke-width="1"/><path d="M22,823.5 H75" stroke="#666" stroke-width="1"/><path d="M22,861.5 H75" stroke="#666" stroke-width="1"/><path d="M22,899.5 H75" stroke="#666" stroke-width="1"/><path d="M22,937.5 H75" stroke="#666" stroke-width="1"/><path d="M22,975.5 H75" stroke="#666" stroke-width="1"/><path d="M22,1013.5 H75" stroke="#666" stroke-width="1"/><path d="M22,1051.5 H75" stroke="#666" stroke-width="1"/><path d="M22,1089.5 H75" stroke="#666" stroke-width="1"/><path d="M22,1127.5 H75" stroke="#666" stroke-width="1"/><path d="M22,1165.5 H75" stroke="#666" stroke-width="1"/></svg>
<svg style="left:0px;top:0px;" width="1" height="1" viewBox="0 0 1 1"><path d="M42,478 L72,478 L72,448 Z" fill="#6b6b6b"/></svg>
<div class="a" style="left:1131px;top:444px;width:186px;height:37px;background:#6b6b6b"></div>
<div class="a" style="left:1131px;top:479px;width:186px;height:2.5px;background:#1e7145"></div>
<div class="a" style="left:1130px;top:444px;width:1px;height:37px;background:#c8c8c8"></div>
<div class="a" style="left:22px;top:710px;width:51px;height:37px;background:#6b6b6b"></div>
<div class="a" style="left:73px;top:709px;width:2.5px;height:39px;background:#1e7145"></div>
<div class="a" style="left:22px;top:709px;width:51px;height:1px;background:#a8a8a8"></div>
<div class="a" style="left:22px;top:747px;width:51px;height:1px;background:#a8a8a8"></div>
<div class="t" style="left:135.7px;top:453.3px;font-size:25px;color:#f0f0f0;font-weight:normal;">A</div>
<div class="t" style="left:281.8px;top:453.3px;font-size:25px;color:#f0f0f0;font-weight:normal;">B</div>
<div class="t" style="left:435.8px;top:453.3px;font-size:25px;color:#f0f0f0;font-weight:normal;">C</div>
<div class="t" style="left:579.5px;top:453.3px;font-size:25px;color:#f0f0f0;font-weight:normal;">D</div>
<div class="t" style="left:731.2px;top:453.3px;font-size:25px;color:#f0f0f0;font-weight:normal;">E</div>
<div class="t" style="left:882.9px;top:453.3px;font-size:25px;color:#f0f0f0;font-weight:normal;">F</div>
<div class="t" style="left:1035.6px;top:453.3px;font-size:25px;color:#f0f0f0;font-weight:normal;">G</div>
<div class="t" style="left:1215.0px;top:453.3px;font-size:25px;color:#f0f0f0;font-weight:normal;">H</div>
<div class="t" style="left:1381.5px;top:453.3px;font-size:25px;color:#f0f0f0;font-weight:normal;">I</div>
<div class="t" style="left:1515.5px;top:453.3px;font-size:25px;color:#f0f0f0;font-weight:normal;">J</div>
<div class="t" style="left:1647.8px;top:453.3px;font-size:25px;color:#f0f0f0;font-weight:normal;">K</div>
<div class="t" style="left:1783.5px;top:453.3px;font-size:25px;color:#f0f0f0;font-weight:normal;">L</div>
<div class="t" style="left:41.1px;top:489.8px;font-size:25px;color:#f0f0f0;font-weight:normal;">1</div>
<div class="t" style="left:41.5px;top:527.8px;font-size:25px;color:#f0f0f0;font-weight:normal;">2</div>
<div class="t" style="left:41.5px;top:565.8px;font-size:25px;color:#f0f0f0;font-weight:normal;">3</div>
<div class="t" style="left:41.5px;top:603.8px;font-size:25px;color:#f0f0f0;font-weight:normal;">4</div>
<div class="t" style="left:41.4px;top:641.8px;font-size:25px;color:#f0f0f0;font-weight:normal;">5</div>
<div class="t" style="left:41.3px;top:679.8px;font-size:25px;color:#f0f0f0;font-weight:normal;">6</div>
<div class="t" style="left:41.4px;top:717.8px;font-size:25px;color:#f0f0f0;font-weight:normal;">7</div>
<div class="t" style="left:41.4px;top:755.8px;font-size:25px;color:#f0f0f0;font-weight:normal;">8</div>
<div class="t" style="left:41.5px;top:793.8px;font-size:25px;color:#f0f0f0;font-weight:normal;">9</div>
<div class="t" style="left:35.4px;top:831.8px;font-size:25px;color:#f0f0f0;font-weight:normal;">10</div>
<div class="t" style="left:36.5px;top:869.8px;font-size:25px;color:#f0f0f0;font-weight:normal;">11</div>
<div class="t" style="left:35.5px;top:907.8px;font-size:25px;color:#f0f0f0;font-weight:normal;">12</div>
<div class="t" style="left:35.5px;top:945.8px;font-size:25px;color:#f0f0f0;font-weight:normal;">13</div>
<div class="t" style="left:35.3px;top:983.8px;font-size:25px;color:#f0f0f0;font-weight:normal;">14</div>
<div class="t" style="left:35.4px;top:1021.8px;font-size:25px;color:#f0f0f0;font-weight:normal;">15</div>
<div class="t" style="left:35.5px;top:1059.8px;font-size:25px;color:#f0f0f0;font-weight:normal;">16</div>
<div class="t" style="left:35.5px;top:1097.8px;font-size:25px;color:#f0f0f0;font-weight:normal;">17</div>
<div class="t" style="left:35.5px;top:1135.8px;font-size:25px;color:#f0f0f0;font-weight:normal;">18</div>
<div class="t" style="left:35.5px;top:1173.8px;font-size:25px;color:#f0f0f0;font-weight:normal;">19</div>
<div class="t" style="left:96.6px;top:489.2px;font-size:25px;color:#000;font-weight:bold;">Produkt</div>
<div class="t" style="left:224.7px;top:489.2px;font-size:25px;color:#000;font-weight:bold;transform:scaleX(1.0071);transform-origin:left top;">Cena netto</div>
<div class="t" style="left:374.5px;top:489.2px;font-size:25px;color:#000;font-weight:bold;transform:scaleX(1.0065);transform-origin:left top;">Cena brutto</div>
<div class="t" style="left:559.5px;top:489.2px;font-size:25px;color:#000;font-weight:bold;transform:scaleX(1.0238);transform-origin:left top;">Ilo&#347;&#263;</div>
<div class="t" style="left:666.6px;top:489.2px;font-size:25px;color:#000;font-weight:bold;transform:scaleX(0.9959);transform-origin:left top;">Suma brutto</div>
<div class="t" style="left:849.4px;top:489.2px;font-size:25px;color:#000;font-weight:bold;transform:scaleX(1.0207);transform-origin:left top;">Razem</div>
<div class="t" style="left:965.0px;top:489.2px;font-size:25px;color:#000;font-weight:bold;transform:scaleX(1.0051);transform-origin:left top;">&#346;rednia netto</div>
<div class="t" style="left:1138.2px;top:489.2px;font-size:25px;color:#000;font-weight:bold;transform:scaleX(1.0030);transform-origin:left top;">&#346;rednia brutto</div>
<div class="t" style="left:79.7px;top:527.2px;font-size:25px;color:#000;font-weight:normal;transform:scaleX(1.0667);transform-origin:left top;">Chleb</div>
<div class="t" style="left:79.0px;top:565.2px;font-size:25px;color:#000;font-weight:normal;transform:scaleX(1.0628);transform-origin:left top;">Mleko</div>
<div class="t" style="left:79.0px;top:603.2px;font-size:25px;color:#000;font-weight:normal;transform:scaleX(1.0628);transform-origin:left top;">Mas&#322;o</div>
<div class="t" style="left:80.7px;top:641.2px;font-size:25px;color:#000;font-weight:normal;transform:scaleX(1.0088);transform-origin:left top;">Jajka 10szt</div>
<div class="t" style="left:80.0px;top:679.2px;font-size:25px;color:#000;font-weight:normal;transform:scaleX(0.9893);transform-origin:left top;">Ser</div>
<div class="t" style="left:348.5px;top:527.2px;font-size:25px;color:#000;font-weight:normal;transform:scaleX(1.1429);transform-origin:left top;">5</div>
<div class="t" style="left:461.7px;top:527.2px;font-size:25px;color:#000;font-weight:normal;transform:scaleX(1.1207);transform-origin:left top;">6,15</div>
<div class="t" style="left:637.3px;top:527.2px;font-size:25px;color:#000;font-weight:normal;transform:scaleX(1.0926);transform-origin:left top;">1</div>
<div class="t" style="left:763.7px;top:527.2px;font-size:25px;color:#000;font-weight:normal;transform:scaleX(1.1207);transform-origin:left top;">6,15</div>
<div class="t" style="left:348.5px;top:565.2px;font-size:25px;color:#000;font-weight:normal;transform:scaleX(1.1429);transform-origin:left top;">5</div>
<div class="t" style="left:461.7px;top:565.2px;font-size:25px;color:#000;font-weight:normal;transform:scaleX(1.1207);transform-origin:left top;">6,15</div>
<div class="t" style="left:636.1px;top:565.2px;font-size:25px;color:#000;font-weight:normal;transform:scaleX(1.1913);transform-origin:left top;">2</div>
<div class="t" style="left:765.1px;top:565.2px;font-size:25px;color:#000;font-weight:normal;transform:scaleX(1.0941);transform-origin:left top;">12,3</div>
<div class="t" style="left:333.9px;top:603.2px;font-size:25px;color:#000;font-weight:normal;transform:scaleX(1.0924);transform-origin:left top;">10</div>
<div class="t" style="left:463.1px;top:603.2px;font-size:25px;color:#000;font-weight:normal;transform:scaleX(1.0941);transform-origin:left top;">12,3</div>
<div class="t" style="left:636.3px;top:603.2px;font-size:25px;color:#000;font-weight:normal;transform:scaleX(1.1610);transform-origin:left top;">3</div>
<div class="t" style="left:764.9px;top:603.2px;font-size:25px;color:#000;font-weight:normal;transform:scaleX(1.1011);transform-origin:left top;">36,9</div>
<div class="t" style="left:333.9px;top:641.2px;font-size:25px;color:#000;font-weight:normal;transform:scaleX(1.1012);transform-origin:left top;">12</div>
<div class="t" style="left:448.3px;top:641.2px;font-size:25px;color:#000;font-weight:normal;transform:scaleX(1.0872);transform-origin:left top;">14,76</div>
<div class="t" style="left:636.1px;top:641.2px;font-size:25px;color:#000;font-weight:normal;transform:scaleX(1.1913);transform-origin:left top;">2</div>
<div class="t" style="left:749.4px;top:641.2px;font-size:25px;color:#000;font-weight:normal;transform:scaleX(1.1047);transform-origin:left top;">29,52</div>
<div class="t" style="left:333.9px;top:679.2px;font-size:25px;color:#000;font-weight:normal;transform:scaleX(1.0924);transform-origin:left top;">15</div>
<div class="t" style="left:448.3px;top:679.2px;font-size:25px;color:#000;font-weight:normal;transform:scaleX(1.0854);transform-origin:left top;">18,45</div>
<div class="t" style="left:636.1px;top:679.2px;font-size:25px;color:#000;font-weight:normal;transform:scaleX(1.1913);transform-origin:left top;">2</div>
<div class="t" style="left:764.9px;top:679.2px;font-size:25px;color:#000;font-weight:normal;transform:scaleX(1.1011);transform-origin:left top;">36,9</div>
<div class="t" style="left:870.3px;top:716.4px;font-size:26px;color:#000;font-weight:bold;transform:scaleX(1.0573);transform-origin:left top;">121,77</div>
<div class="t" style="left:1086.8px;top:716.4px;font-size:26px;color:#000;font-weight:bold;transform:scaleX(1.0655);transform-origin:left top;">9,4</div>
<div class="t" style="left:1228.5px;top:716.4px;font-size:26px;color:#000;font-weight:bold;transform:scaleX(1.0743);transform-origin:left top;">11,562</div>
<div class="a" style="left:1128.5px;top:707px;width:190px;height:42.5px;border:3px solid #217346"></div>
<div class="a" style="left:1311px;top:743px;width:9px;height:9px;background:#217346;border:1.5px solid #fff"></div>
<div class="a" style="left:1809px;top:444px;width:38px;height:754px;background:#111312"></div>
<div class="a" style="left:1811px;top:444px;width:34px;height:756px;background:#171717;border-radius:17px"></div>
<svg style="left:0px;top:0px;" width="1" height="1" viewBox="0 0 1 1"><path d="M1828,455 L1836,467 H1820 Z" fill="#9a9a9a" stroke="#9a9a9a" stroke-width="2" stroke-linejoin="round"/></svg>
<div class="a" style="left:1820px;top:478px;width:16px;height:614px;background:#9a9a9a;border-radius:8px"></div>
<svg style="left:0px;top:0px;" width="1" height="1" viewBox="0 0 1 1"><path d="M1828,1189 L1836,1178 H1820 Z" fill="#9a9a9a" stroke="#9a9a9a" stroke-width="2" stroke-linejoin="round"/></svg>
<div class="a" style="left:22px;top:1198px;width:1825px;height:44px;background:#121410"></div>
<div class="a" style="left:38px;top:1198px;width:129px;height:44px;background:#262626"></div>
<div class="a" style="left:292px;top:1198px;width:87px;height:44px;background:#262626"></div>
<div class="a" style="left:167px;top:1198px;width:125px;height:40px;background:#fff"></div>
<div class="a" style="left:167px;top:1235px;width:125px;height:3px;background:#1e7b45"></div>
<div class="t" style="left:179.3px;top:1204.0px;font-size:26px;color:#1e7145;font-weight:bold;transform:scaleX(0.9779);transform-origin:left top;">Arkusz1</div>
<svg style="left:0px;top:0px;" width="1" height="1" viewBox="0 0 1 1">
<path d="M65,1212 V1228 L56,1220 Z" fill="#b0b0b0"/>
<path d="M99,1212 V1228 L108,1220 Z" fill="#b0b0b0"/>
<circle cx="358" cy="1221" r="15" fill="none" stroke="#e6e6e6" stroke-width="2"/>
<path d="M358,1213 V1229 M350,1221 H366" stroke="#e6e6e6" stroke-width="3"/>
</svg>
<svg style="left:0px;top:0px;" width="1" height="1" viewBox="0 0 1 1"><rect x="1113.5" y="1210" width="4" height="4" fill="#ddd"/><rect x="1113.5" y="1218" width="4" height="4" fill="#ddd"/><rect x="1113.5" y="1226" width="4" height="4" fill="#ddd"/></svg>
<div class="a" style="left:1137px;top:1202px;width:670px;height:34px;background:#161616;border-radius:17px"></div>
<svg style="left:0px;top:0px;" width="1" height="1" viewBox="0 0 1 1">
<path d="M1148,1219 L1160,1210 V1228 Z" fill="#9a9a9a" stroke="#9a9a9a" stroke-width="1.5" stroke-linejoin="round"/>
<path d="M1801,1219 L1789,1210 V1228 Z" fill="#9a9a9a" stroke="#9a9a9a" stroke-width="1.5" stroke-linejoin="round"/>
</svg>
<div class="a" style="left:1171px;top:1211px;width:587px;height:16px;background:#9a9a9a;border-radius:8px"></div>
<div class="a" style="left:22px;top:1241px;width:1825px;height:2px;background:#3a3a3a"></div>
<div class="a" style="left:22px;top:1243px;width:1825px;height:42px;background:#161616;border-radius:0 0 11px 11px"></div>
<div class="t" style="left:44.4px;top:1254.6px;font-size:22px;color:#fff;font-weight:normal;transform:scaleX(0.9428);transform-origin:left top;">Gotowy</div>
<svg style="left:0px;top:0px;" width="1" height="1" viewBox="0 0 1 1">
<circle cx="192.8" cy="1254.5" r="3.5" fill="none" stroke="#fff" stroke-width="2"/>
<path d="M181.5,1256.5 Q182,1260.5 187.5,1261.5 V1268 L185.5,1273.5 Q185,1277 189.5,1276.5 M187.5,1261.5 Q193,1262.5 198,1261.5 Q203.5,1260.5 204,1256.5 M198,1261.5 V1267" fill="none" stroke="#fff" stroke-width="2" stroke-linecap="round" stroke-linejoin="round"/>
<path d="M194,1271 L200,1277 L210.5,1266.5" fill="none" stroke="#fff" stroke-width="2"/>
</svg>
<div class="t" style="left:215.1px;top:1254.6px;font-size:22px;color:#fff;font-weight:normal;transform:scaleX(0.9581);transform-origin:left top;">U&#322;atwienia dost&#281;pu: dobrze przygotowane</div>
<svg style="left:0px;top:0px;" width="1" height="1" viewBox="0 0 1 1">
<path d="M947,1269 H940 V1253 H966 V1264" fill="none" stroke="#fff" stroke-width="2.2"/>
<path d="M963.37,1265.90 L964.40,1267.40 L966.47,1267.51 L966.47,1270.49 L964.40,1270.60 L963.37,1272.10 L962.58,1273.75 L963.53,1275.59 L960.94,1277.08 L959.82,1275.34 L958.00,1275.20 L956.18,1275.34 L955.06,1277.08 L952.47,1275.59 L953.42,1273.75 L952.63,1272.10 L951.60,1270.60 L949.53,1270.49 L949.53,1267.51 L951.60,1267.40 L952.63,1265.90 L953.42,1264.25 L952.47,1262.41 L955.06,1260.92 L956.18,1262.66 L958.00,1262.80 L959.82,1262.66 L960.94,1260.92 L963.53,1262.41 L962.58,1264.25 Z" fill="#161616" stroke="#fff" stroke-width="2" stroke-linejoin="round"/>
<circle cx="958" cy="1269" r="2.6" fill="#fff"/>
</svg>
<div class="t" style="left:972.0px;top:1254.6px;font-size:22px;color:#fff;font-weight:normal;transform:scaleX(0.9372);transform-origin:left top;">Ustawienia wy&#347;wietlania</div>
<div class="a" style="left:1232px;top:1243px;width:79px;height:42px;background:#2a2a2a"></div>
<svg style="left:0px;top:0px;" width="1" height="1" viewBox="0 0 1 1">
<rect x="1258" y="1251" width="25" height="24" fill="none" stroke="#fff" stroke-width="2"/>
<path d="M1266.3,1251 V1275 M1274.6,1251 V1275 M1258,1259 H1283 M1258,1267 H1283" stroke="#fff" stroke-width="2"/>
<rect x="1338" y="1251" width="26" height="24" fill="none" stroke="#fff" stroke-width="2"/>
<rect x="1344" y="1255" width="15" height="17" fill="none" stroke="#fff" stroke-width="2.2"/>
<path d="M1347,1259 H1355 M1347,1263 H1355 M1347,1267 H1355" stroke="#fff" stroke-width="2"/>
<rect x="1418" y="1251" width="26" height="24" fill="none" stroke="#fff" stroke-width="2"/>
<path d="M1419,1265 H1434 V1251 M1426,1251 V1265" fill="none" stroke="#fff" stroke-width="2"/>
<path d="M1483,1263 H1498" stroke="#bbb" stroke-width="1.6"/>
<path d="M1510,1263 H1708" stroke="#9a9a9a" stroke-width="2"/>
<rect x="1604" y="1253" width="10" height="22" fill="#bdbdbd"/>
<path d="M1719,1263.5 H1734 M1726.5,1256 V1271" stroke="#ddd" stroke-width="1.6"/>
</svg>
<div class="t" style="left:1759.0px;top:1254.3px;font-size:22px;color:#fff;font-weight:normal;transform:scaleX(0.9015);transform-origin:left top;">100%</div>
<div class="t" style="left:1550.7px;top:1287.6px;font-size:30px;color:#9aa0a8;font-weight:normal;transform:scaleX(0.9430);transform-origin:left top;font-family:'Liberation Mono',monospace;">DrManhattan</div>
</body></html>
